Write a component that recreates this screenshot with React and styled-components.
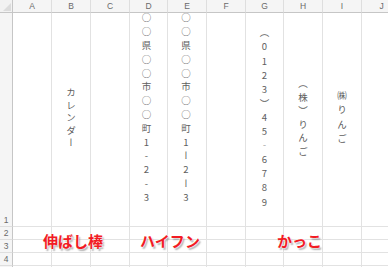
import React from 'react';
import styled, { createGlobalStyle } from 'styled-components';

const GlobalStyle = createGlobalStyle`
  html, body {
    margin: 0;
    padding: 0;
    background: #fff;
    overflow: hidden;
  }
`;

const COLS = [
  { name: 'A', w: 39 },
  { name: 'B', w: 39 },
  { name: 'C', w: 39 },
  { name: 'D', w: 38 },
  { name: 'E', w: 39 },
  { name: 'F', w: 39 },
  { name: 'G', w: 38 },
  { name: 'H', w: 39 },
  { name: 'I', w: 39 },
  { name: 'J', w: 40 },
];

const ROWS = [
  { n: 1, h: 214 },
  { n: 2, h: 13 },
  { n: 3, h: 13 },
  { n: 4, h: 13 },
  { n: 5, h: 13, hidden: true },
];

const Wrap = styled.div`
  position: relative;
  width: 388px;
  height: 267px;
  overflow: hidden;
  font-family: 'Noto Sans CJK JP', 'Noto Sans', sans-serif;
`;

const Sheet = styled.div`
  display: grid;
  grid-template-columns: 13px ${COLS.map((c) => `${c.w}px`).join(' ')};
  grid-template-rows: 13px ${ROWS.map((r) => `${r.h}px`).join(' ')};
`;

const Corner = styled.div`
  position: relative;
  background: #f2f2f2;
  border-right: 1px solid #c6c6c6;
  border-bottom: 1px solid #c6c6c6;
  box-sizing: border-box;

  &::after {
    content: '';
    position: absolute;
    right: 1px;
    bottom: 1px;
    border-left: 8px solid transparent;
    border-bottom: 8px solid #dcdcdc;
  }
`;

const ColHead = styled.div`
  display: flex;
  align-items: center;
  justify-content: center;
  background: #f5f5f5;
  border-right: 1px solid #dedede;
  border-bottom: 1px solid #c6c6c6;
  box-sizing: border-box;
  color: #6a6a6a;
  font-family: 'Liberation Sans', sans-serif;
  font-size: 8.5px;
`;

const RowHead = styled.div`
  display: flex;
  align-items: flex-end;
  justify-content: center;
  padding-bottom: 1px;
  background: #f5f5f5;
  border-right: 1px solid #c6c6c6;
  border-bottom: 1px solid #dedede;
  box-sizing: border-box;
  color: #6a6a6a;
  font-family: 'Liberation Sans', sans-serif;
  font-size: 8.5px;
  line-height: 10px;
`;

const Cell = styled.div`
  display: flex;
  justify-content: center;
  align-items: ${(p) => (p.$top ? 'flex-start' : 'center')};
  padding-right: ${(p) => p.$shift || 0}px;
  border-right: 1px solid #e2e2e2;
  border-bottom: 1px solid #e2e2e2;
  box-sizing: border-box;
`;

const VText = styled.div`
  writing-mode: vertical-rl;
  text-orientation: upright;
  font-family: 'Noto Sans CJK JP', sans-serif;
  font-size: 9.5px;
  line-height: 12px;
  letter-spacing: ${(p) => p.$gap}px;
  color: #5e5e5e;
  white-space: nowrap;
`;

const Label = styled.div`
  position: absolute;
  top: ${(p) => p.$y}px;
  left: ${(p) => p.$x}px;
  font-family: 'Noto Sans CJK JP', sans-serif;
  font-weight: 700;
  font-size: 15px;
  line-height: 15px;
  color: #f21b24;
  white-space: nowrap;
  text-shadow: 0 0 1.5px #fff, 0 0 2px #fff, 1.5px 1.5px 1.5px rgba(0, 0, 0, 0.32);
`;

const CONTENT = {
  B: { text: 'カレンダー', gap: 3 },
  D: { text: '○○県○○市○○町1-2-3', gap: 4.3, top: true, shift: 4 },
  E: { text: '○○県○○市○○町1ー2ー3', gap: 4.3, top: true, shift: 2 },
  G: { text: '（0123）45‐6789', gap: 4.6 },
  H: { text: '（株）りんご', gap: 4 },
  I: { text: '㈱りんご', gap: 4.6 },
};

export default function App() {
  return (
    <Wrap>
      <GlobalStyle />
      <Sheet>
        <Corner />
        {COLS.map((c) => (
          <ColHead key={c.name}>{c.name}</ColHead>
        ))}
        {ROWS.map((r) => (
          <React.Fragment key={r.n}>
            <RowHead>{r.hidden ? '' : r.n}</RowHead>
            {COLS.map((c) => {
              const item = r.n === 1 ? CONTENT[c.name] : null;
              return (
                <Cell key={c.name} $top={item && item.top} $shift={item && item.shift}>
                  {item && <VText $gap={item.gap}>{item.text}</VText>}
                </Cell>
              );
            })}
          </React.Fragment>
        ))}
      </Sheet>
      <Label $x={43} $y={233}>伸ばし棒</Label>
      <Label $x={140} $y={233}>ハイフン</Label>
      <Label $x={277} $y={233}>かっこ</Label>
    </Wrap>
  );
}
